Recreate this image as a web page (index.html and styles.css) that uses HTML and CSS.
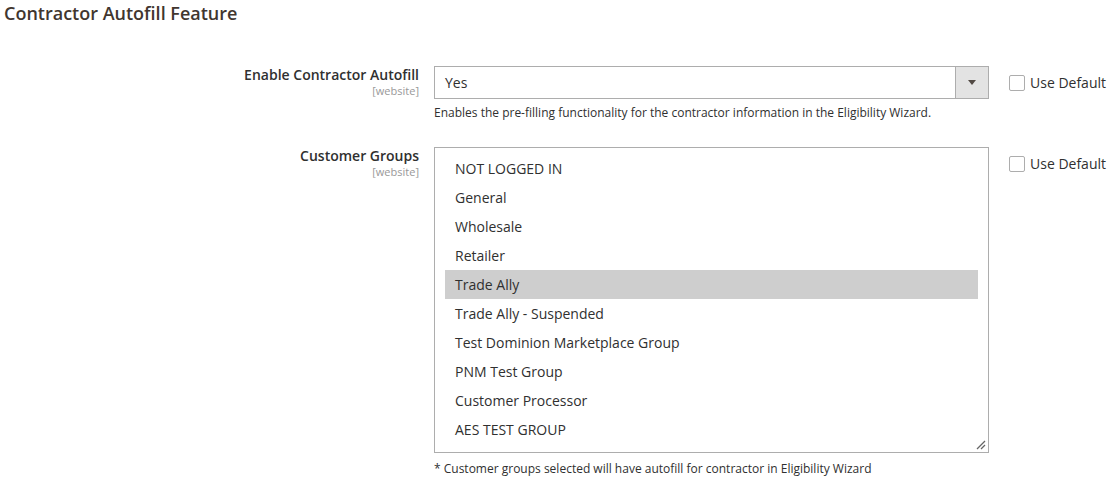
FILE: index.html
```html
<!DOCTYPE html>
<html>
<head>
<meta charset="utf-8">
<link rel="stylesheet" href="styles.css">
</head>
<body>
<h2 class="title">Contractor Autofill Feature</h2>
<div class="form">
  <div class="row">
    <div class="label">
      <span class="label-text">Enable Contractor Autofill</span>
      <span class="scope">[website]</span>
    </div>
    <div class="control">
      <div class="select">
        <span class="select-value">Yes</span>
        <span class="select-arrow"><span class="tri"></span></span>
      </div>
      <div class="note">Enables the pre-filling functionality for the contractor information in the Eligibility Wizard.</div>
    </div>
    <label class="use-default"><span class="checkbox"></span><span>Use Default</span></label>
  </div>
  <div class="row row-groups">
    <div class="label">
      <span class="label-text">Customer Groups</span>
      <span class="scope">[website]</span>
    </div>
    <div class="control">
      <div class="multiselect">
        <div class="option">NOT LOGGED IN</div>
        <div class="option">General</div>
        <div class="option">Wholesale</div>
        <div class="option">Retailer</div>
        <div class="option selected">Trade Ally</div>
        <div class="option">Trade Ally - Suspended</div>
        <div class="option">Test Dominion Marketplace Group</div>
        <div class="option">PNM Test Group</div>
        <div class="option">Customer Processor</div>
        <div class="option">AES TEST GROUP</div>
        <svg class="resize" width="10" height="10" viewBox="0 0 10 10">
          <line x1="1" y1="9" x2="9" y2="1" stroke="#666" stroke-width="1.2"/>
          <line x1="5" y1="9" x2="9" y2="5" stroke="#666" stroke-width="1.2"/>
        </svg>
      </div>
      <div class="note">* Customer groups selected will have autofill for contractor in Eligibility Wizard</div>
    </div>
    <label class="use-default"><span class="checkbox"></span><span>Use Default</span></label>
  </div>
</div>
</body>
</html>
```

FILE: styles.css
```css
* { box-sizing: border-box; }
html, body { margin: 0; padding: 0; background: #fff; }
body {
  font-family: "Open Sans", "Noto Sans", sans-serif;
  color: #303030;
  font-size: 14px;
  width: 1118px;
  height: 486px;
  overflow: hidden;
}
.title {
  margin: 0;
  padding: 1px 0 0 4px;
  font-size: 18px;
  line-height: 24px;
  font-weight: 600;
  color: #41362f;
  height: 66px;
}
.form { display: flex; flex-direction: column; }
.row {
  display: flex;
  align-items: flex-start;
}
.row-groups { margin-top: 27px; }
.label {
  width: 434px;
  padding-right: 15px;
  display: flex;
  flex-direction: column;
  align-items: flex-end;
  text-align: right;
}
.label-text {
  font-weight: 600;
  font-size: 14px;
  line-height: 18px;
  color: #303030;
}
.scope {
  font-size: 11px;
  line-height: 13px;
  color: #999;
}
.control { width: 555px; }
.select {
  height: 33px;
  border: 1px solid #adadad;
  display: flex;
  align-items: center;
  background: #fff;
}
.select-value {
  flex: 1;
  padding-left: 10px;
  line-height: 31px;
}
.select-arrow {
  width: 33px;
  height: 31px;
  background: #e3e3e3;
  border-left: 1px solid #adadad;
  display: flex;
  align-items: center;
  justify-content: center;
}
.tri {
  width: 0;
  height: 0;
  border-left: 4px solid transparent;
  border-right: 4px solid transparent;
  border-top: 5px solid #514943;
}
.note {
  margin-top: 6px;
  font-size: 12px;
  line-height: 15px;
  color: #303030;
}
.multiselect {
  position: relative;
  height: 306px;
  border: 1px solid #adadad;
  padding: 6px 10px 8px 10px;
}
.option {
  height: 29px;
  line-height: 29px;
  padding-left: 10px;
  font-size: 14px;
}
.option.selected { background: #cecece; }
.resize {
  position: absolute;
  right: 2px;
  bottom: 2px;
}
.row-groups .note { margin-top: 8px; }
.use-default {
  display: flex;
  align-items: center;
  margin-left: 20px;
  margin-top: 8px;
  font-size: 14px;
  line-height: 18px;
  color: #303030;
}
.checkbox {
  width: 16px;
  height: 16px;
  border: 1px solid #adadad;
  border-radius: 2px;
  background: #fff;
  margin-right: 5px;
}
```
